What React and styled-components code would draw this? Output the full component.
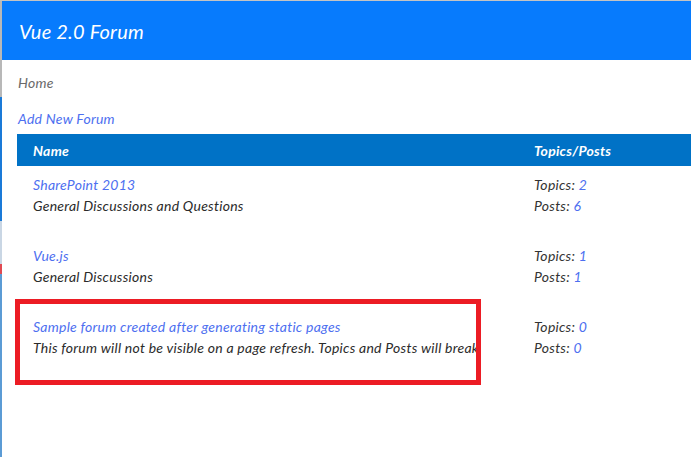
import React from "react";
import styled, { createGlobalStyle } from "styled-components";

const GlobalStyle = createGlobalStyle`
  html, body {
    margin: 0;
    padding: 0;
    background: #fff;
    overflow: hidden;
  }
  body {
    font-family: "Lato", "Open Sans", sans-serif;
    font-style: italic;
    font-size: 14px;
    letter-spacing: 0.25px;
    color: #333;
  }
`;

const Frame = styled.div`
  display: flex;
  min-height: 457px;
  border-top: 1px solid #c4c4c4;
`;

const Edge = styled.div`
  flex: 0 0 2px;
  background: linear-gradient(
    to bottom,
    #b8b8b8 0px,
    #b8b8b8 96px,
    #1a7ad8 96px,
    #1a7ad8 220px,
    #c9d6e4 220px,
    #c9d6e4 263px,
    #e04a52 263px,
    #e04a52 273px,
    #5b9bd5 273px
  );
`;

const Page = styled.div`
  flex: 1;
  min-width: 0;
  overflow: hidden;
`;

const Header = styled.header`
  height: 59px;
  background: #077bfd;
  display: flex;
  align-items: center;
  padding-left: 17px;
`;

const Title = styled.h1`
  margin: 0;
  color: #fff;
  font-size: 20px;
  font-weight: 400;
  letter-spacing: 0.2px;
`;

const Content = styled.main`
  padding-left: 15px;
`;

const Crumb = styled.div`
  padding-top: 12px;
  padding-left: 1px;
  line-height: 22px;
  color: #6a6a6a;
`;

const Link = styled.a`
  color: #4d6ff0;
  text-decoration: none;
  cursor: pointer;
`;

const AddLine = styled.div`
  margin-top: 14px;
  padding-left: 1px;
  line-height: 22px;
`;

const Table = styled.div`
  margin-top: 4px;
`;

const Row = styled.div`
  position: relative;
  display: grid;
  grid-template-columns: 501px 1fr;
`;

const HeadRow = styled(Row)`
  background: #0072c6;
  height: 32px;
  align-items: center;
  color: #fff;
  font-weight: 700;
`;

const Cell = styled.div`
  padding: ${(p) => (p.$head ? "0 16px" : "8px 16px 21px")};
  line-height: 21px;
  overflow: hidden;
  white-space: nowrap;
  ${(p) => (p.$name ? "padding-right: 25px;" : "")}
`;

const Desc = styled.div`
  color: #2b2b2b;
`;

const Highlight = styled.div`
  position: absolute;
  left: -2px;
  top: -9px;
  width: 456px;
  height: 76px;
  border: 5px solid #ec1c24;
  pointer-events: none;
`;

const forums = [
  { name: "SharePoint 2013", desc: "General Discussions and Questions", topics: 2, posts: 6 },
  { name: "Vue.js", desc: "General Discussions", topics: 1, posts: 1 },
  {
    name: "Sample forum created after generating static pages",
    desc: "This forum will not be visible on a page refresh. Topics and Posts will break",
    topics: 0,
    posts: 0,
    marked: true,
  },
];

const App = () => {
  return (
    <>
      <GlobalStyle />
      <Frame>
        <Edge />
        <Page>
          <Header>
            <Title>Vue 2.0 Forum</Title>
          </Header>
          <Content>
            <Crumb>Home</Crumb>
            <AddLine>
              <Link>Add New Forum</Link>
            </AddLine>
            <Table>
              <HeadRow>
                <Cell $head>Name</Cell>
                <Cell $head>Topics/Posts</Cell>
              </HeadRow>
              {forums.map((f) => (
                <Row key={f.name}>
                  <Cell $name>
                    <div>
                      <Link>{f.name}</Link>
                    </div>
                    <Desc>{f.desc}</Desc>
                  </Cell>
                  <Cell>
                    <div>
                      Topics: <Link>{f.topics}</Link>
                    </div>
                    <div>
                      Posts: <Link>{f.posts}</Link>
                    </div>
                  </Cell>
                  {f.marked && <Highlight />}
                </Row>
              ))}
            </Table>
          </Content>
        </Page>
      </Frame>
    </>
  );
};

export default App;
